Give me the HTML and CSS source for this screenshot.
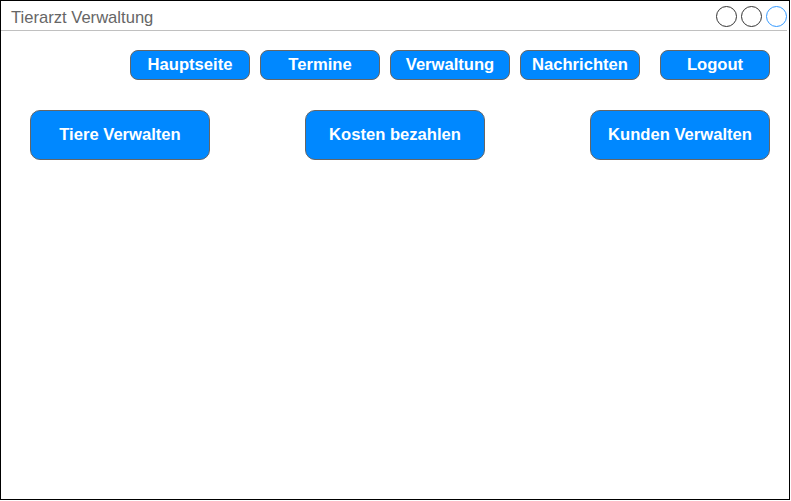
FILE: index.html
```html
<!DOCTYPE html>
<html lang="de">
<head>
<meta charset="utf-8">
<title>Tierarzt Verwaltung</title>
<link rel="stylesheet" href="styles.css">
</head>
<body>
<div class="window">
  <div class="titlebar">
    <span class="title">Tierarzt Verwaltung</span>
    <div class="controls">
      <span class="dot"></span>
      <span class="dot"></span>
      <span class="dot dot-active"></span>
    </div>
  </div>
  <nav class="nav">
    <button class="nav-btn">Hauptseite</button>
    <button class="nav-btn">Termine</button>
    <button class="nav-btn">Verwaltung</button>
    <button class="nav-btn">Nachrichten</button>
    <button class="nav-btn nav-logout">Logout</button>
  </nav>
  <div class="actions">
    <button class="big-btn">Tiere Verwalten</button>
    <button class="big-btn big-mid">Kosten bezahlen</button>
    <button class="big-btn big-right">Kunden Verwalten</button>
  </div>
</div>
</body>
</html>
```
FILE: styles.css
```css
html, body {
  margin: 0;
  padding: 0;
  background: #fff;
}
body {
  font-family: "Liberation Sans", Arial, Helvetica, sans-serif;
}
.window {
  width: 790px;
  height: 500px;
  box-sizing: border-box;
  border: 1px solid #000;
  background: #fff;
}
.titlebar {
  height: 30px;
  box-sizing: border-box;
  border-bottom: 1px solid #c0c0c0;
  margin-right: 2px;
  display: flex;
  align-items: center;
  justify-content: space-between;
  padding-left: 10px;
}
.title {
  font-size: 16.6px;
  color: #666;
  margin-top: 4px;
}
.controls {
  display: flex;
  gap: 4px;
  padding-top: 1px;
}
.dot {
  width: 19px;
  height: 19px;
  border: 1px solid #333;
  border-radius: 50%;
  background: #fff;
}
.dot-active {
  border-color: #3399ff;
}
.nav {
  display: flex;
  padding-left: 129px;
  margin-top: 19px;
  gap: 10px;
}
button {
  font-family: "Liberation Sans", Arial, Helvetica, sans-serif;
  font-weight: bold;
  color: #fff;
  background: #0088ff;
  border: 1px solid #666;
  box-sizing: border-box;
  padding: 0;
  cursor: pointer;
}
.nav-btn {
  width: 120px;
  height: 30px;
  border-radius: 8px;
  font-size: 16.6px;
}
.nav-logout {
  width: 110px;
  margin-left: 10px;
}
.actions {
  display: flex;
  padding-left: 29px;
  margin-top: 30px;
}
.big-btn {
  width: 180px;
  height: 50px;
  border-radius: 10px;
  font-size: 16.6px;
}
.big-mid {
  margin-left: 95px;
}
.big-right {
  margin-left: 105px;
}
```
